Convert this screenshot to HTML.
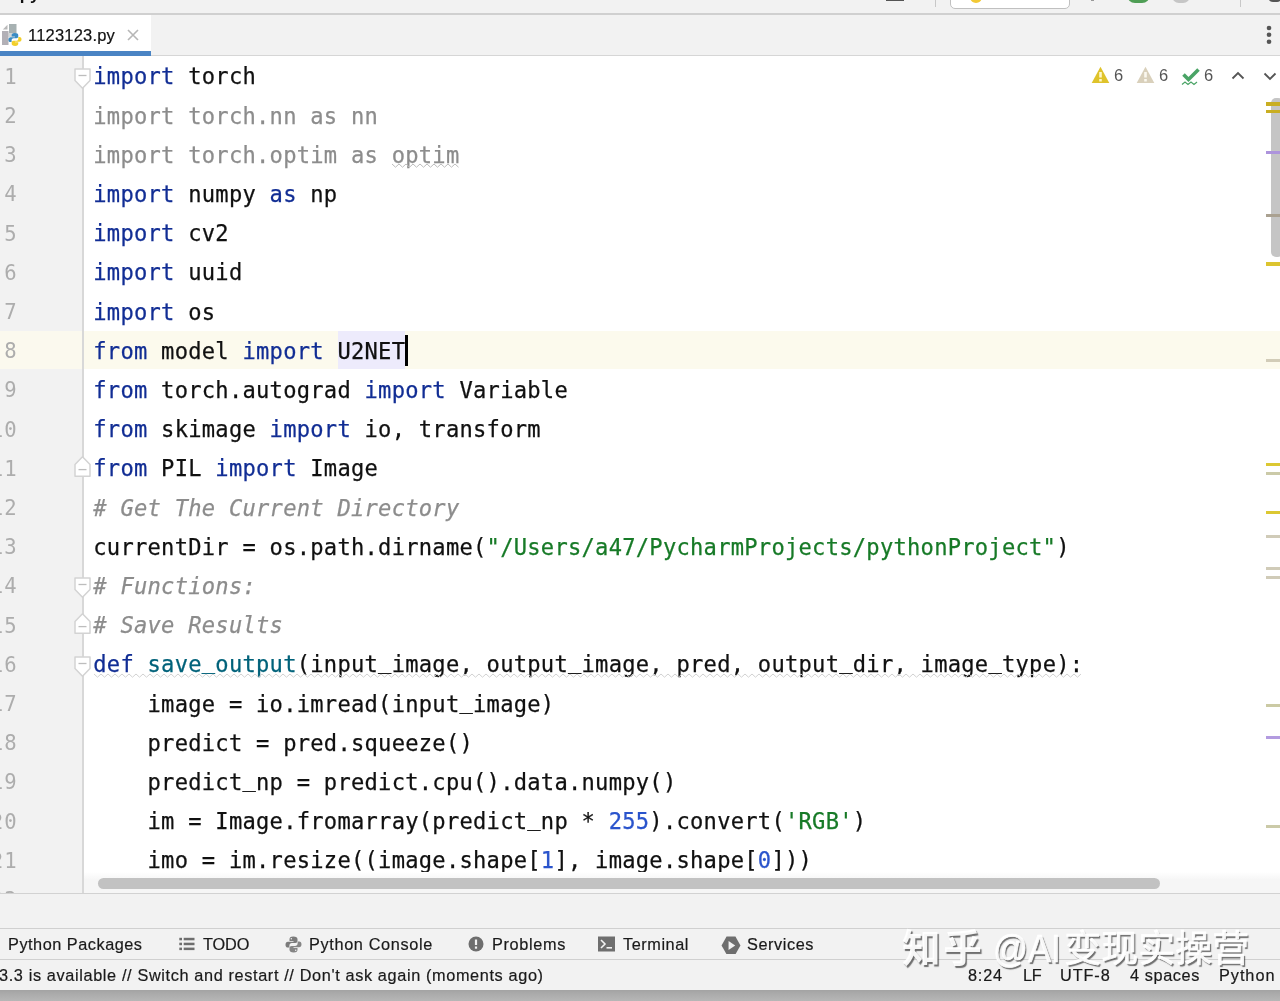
<!DOCTYPE html>
<html lang="en">
<head>
<meta charset="utf-8">
<title>1123123.py</title>
<style>
*{box-sizing:border-box;margin:0;padding:0}
html,body{width:1280px;height:1001px;overflow:hidden;background:#f2f2f2}
body{position:relative;font-family:"Liberation Sans","Noto Sans CJK SC",sans-serif;color:#1a1a1a}
.abs{position:absolute}
#top{left:0;top:0;width:1280px;height:15px;background:#f2f2f2;border-bottom:2px solid #d0d0d0;overflow:hidden}
#tabbar{left:0;top:15px;width:1280px;height:41px;background:#f2f2f2;border-bottom:1px solid #d6d6d6}
#tab{left:0;top:0;width:151px;height:41px;background:#fff}
#tab .ul{left:0;top:36px;width:151px;height:5px;background:#4a84c4}
#tabname{will-change:transform;-webkit-text-stroke:.2px;letter-spacing:.2px;left:27.5px;top:10px;font-size:16.5px;line-height:20px;color:#111;white-space:nowrap}
#editor{left:0;top:56px;width:1280px;height:838px;background:#fff;overflow:hidden}
#gutter{left:0;top:0;width:83px;height:838px;background:#f2f2f2}
#gline{left:82px;top:0;width:2px;height:838px;background:#d8d8d8}
#caretline{left:0;top:275px;width:1280px;height:38.3px;background:#fcfaed}
.ln{position:absolute;left:-42.2px;width:60px;text-align:right;height:39.2px;line-height:39.2px;margin-top:.5px;font-family:"DejaVu Sans Mono","Liberation Mono",monospace;font-size:20.6px;letter-spacing:1.1px;color:#adadad;white-space:pre}
.cl{-webkit-text-stroke:.25px;position:absolute;left:93.3px;height:39.2px;line-height:39.2px;font-family:"DejaVu Sans Mono","Liberation Mono",monospace;font-size:22.1px;letter-spacing:.26px;color:#101010;white-space:pre}
.u{position:relative;top:-4px}
.k{color:#112d94}
.g{color:#8c8c8c}
.c{color:#8c8c8c;font-style:italic}
.s{color:#177a27}
.n{color:#2a54cc}
.f{color:#00627a}
#hl{left:337.6px;top:274.8px;width:67.4px;height:38.2px;background:#edebfc}
#caret{left:405px;top:279px;width:3px;height:31px;background:#000}
#vthumb{left:1271px;top:42px;width:12px;height:159px;border-radius:5px;background:#c5c5c5}
#htrack{left:84px;top:816px;width:1196px;height:22px;background:linear-gradient(#fff,#f6f6f6 35%)}
#ebot{left:0;top:837px;width:1280px;height:1px;background:#d2d2d2}
#hthumb{left:98px;top:821.6px;width:1062px;height:11.6px;border-radius:6px;background:#c2c2c2}
#gap{left:0;top:894px;width:1280px;height:35px;background:#f2f2f2;border-bottom:1px solid #d0d0d0}
#tools{left:0;top:929px;width:1280px;height:31px;background:#f2f2f2;border-bottom:1px solid #d0d0d0}
#status{left:0;top:960px;width:1280px;height:30px;background:#f2f2f2}
#below{left:0;top:990px;width:1280px;height:11px;background:linear-gradient(#a3a3a3,#ababab 35%,#b6b6b6)}
.tw{will-change:transform;-webkit-text-stroke:.2px;position:absolute;top:5px;font-size:16.3px;line-height:20px;white-space:nowrap;color:#1a1a1a}
.st{will-change:transform;-webkit-text-stroke:.2px;position:absolute;top:5px;font-size:16.3px;line-height:20px;white-space:nowrap;color:#1a1a1a}
.ic{position:absolute}
.cnt{will-change:transform;position:absolute;top:9px;font-size:16.5px;line-height:20px;color:#555}
#wm{left:903px;top:923px;font-size:37px;line-height:52px;white-space:nowrap;color:rgba(255,255,255,.94);-webkit-text-stroke:.7px rgba(255,255,255,.95);text-shadow:1.5px 2px 1px rgba(60,60,60,.72);font-family:"Liberation Sans","Noto Sans CJK SC",sans-serif;word-spacing:-1.5px}
#wm .lg{font-weight:bold;font-size:38.5px;letter-spacing:2.8px;-webkit-text-stroke:0;margin-left:-1px}
#wm .at{display:inline-block;font-size:38.4px;transform:scaleX(.9);transform-origin:0 50%;margin-right:-4.5px}
</style>
</head>
<body>
<div id="top" class="abs">
  <div class="abs" style="left:15px;top:-14px;font-size:17px;line-height:17px;font-weight:bold;color:#111;will-change:transform">.py</div>
  <div class="abs" style="left:886px;top:-1px;width:18px;height:2px;background:#555"></div>
  <div class="abs" style="left:935px;top:0;width:1px;height:7px;background:#c8c8c8"></div>
  <div class="abs" style="left:950px;top:-12px;width:120px;height:21px;background:#fff;border:1px solid #c0c0c0;border-radius:5px"></div>
  <div class="abs" style="left:970px;top:-9px;width:12px;height:12px;border-radius:6px;background:#f2c935"></div>
  <div class="abs" style="left:1091px;top:-1px;width:3px;height:2px;background:#999"></div>
  <div class="abs" style="left:1127px;top:-13px;width:23px;height:16px;border-radius:9px;background:#4f9e55"></div>
  <div class="abs" style="left:1172px;top:-12px;width:18px;height:15px;border-radius:7px;background:#c6c6c6"></div>
  <div class="abs" style="left:1240px;top:0;width:1px;height:7px;background:#c8c8c8"></div>
  <div class="abs" style="left:1268px;top:-10px;width:14px;height:12px;border-radius:5px;background:#555"></div>
</div>
<div id="tabbar" class="abs">
  <div id="tab" class="abs">
    <svg class="abs" style="left:0px;top:8px" width="24" height="26" viewBox="0 0 24 26">
      <path d="M2.800 6.500 L7.500 1.800 V6.500 Z" fill="#b9b9b9"/>
      <rect x="9" y="1" width="7.500" height="9" fill="#a7b1b2"/>
      <rect x="2" y="8" width="6.500" height="14" fill="#b2b0b6"/>
      <path d="M8.500 10 h8 v4 h-8 z" fill="#a7b1b2" opacity=".5"/>
      <g transform="translate(8 9.500) scale(.82)"><path d="M8.300 .5 C5.300 .5 4.500 1.700 4.500 3.200 V5 H8.500 V5.700 H3 C1.400 5.700 .5 7 .5 8.700 C.5 10.400 1.300 11.600 2.900 11.600 H4.400 V9.400 C4.400 8 5.500 6.900 6.900 6.900 H10.400 C11.600 6.900 12.500 6 12.500 4.900 V3.200 C12.500 1.600 11.200 .5 8.300 .5 Z" fill="#3a8cc4"/><path d="M8.300 .5 C5.300 .5 4.500 1.700 4.500 3.200 V5 H8.500 V5.700 H3 C1.400 5.700 .5 7 .5 8.700 C.5 10.400 1.300 11.600 2.900 11.600 H4.400 V9.400 C4.400 8 5.500 6.900 6.900 6.900 H10.400 C11.600 6.900 12.500 6 12.500 4.900 V3.200 C12.500 1.600 11.200 .5 8.300 .5 Z" fill="#f2cf2a" transform="rotate(180 8.500 8.500)"/></g>
    </svg>
    <div id="tabname" class="abs">1123123.py</div>
    <svg class="abs" style="left:127px;top:14px" width="12" height="12" viewBox="0 0 12 12"><path d="M1 1 L11 11 M11 1 L1 11" stroke="#b6b6b6" stroke-width="1.600" fill="none"/></svg>
    <div class="ul abs"></div>
  </div>
  <svg class="abs" style="left:1265px;top:8px" width="8" height="24" viewBox="0 0 8 24"><circle cx="4" cy="5" r="2.300" fill="#555"/><circle cx="4" cy="11.800" r="2.300" fill="#555"/><circle cx="4" cy="18.800" r="2.300" fill="#555"/></svg>
</div>
<div id="editor" class="abs">
  <div id="caretline" class="abs"></div>
  <div id="gutter" class="abs"></div>
  <div class="abs" style="left:0;top:275px;width:83px;height:38.3px;background:#fbf9ee"></div>
  <div id="gline" class="abs"></div>
  <div id="hl" class="abs"></div>
  <div id="caret" class="abs"></div>
<div id="code" class="abs" style="left:0;top:0;width:1280px;height:838px;will-change:transform">
<div class="ln" style="top:1.3px">1</div>
<div class="cl" style="top:1.3px"><span class="k">import</span> torch</div>
<div class="ln" style="top:40.5px">2</div>
<div class="cl" style="top:40.5px"><span class="g">import torch.nn as nn</span></div>
<div class="ln" style="top:79.7px">3</div>
<div class="cl" style="top:79.7px"><span class="g">import torch.optim as <span class="wv2">optim</span></span></div>
<div class="ln" style="top:118.9px">4</div>
<div class="cl" style="top:118.9px"><span class="k">import</span> numpy <span class="k">as</span> np</div>
<div class="ln" style="top:158.1px">5</div>
<div class="cl" style="top:158.1px"><span class="k">import</span> cv2</div>
<div class="ln" style="top:197.3px">6</div>
<div class="cl" style="top:197.3px"><span class="k">import</span> uuid</div>
<div class="ln" style="top:236.5px">7</div>
<div class="cl" style="top:236.5px"><span class="k">import</span> os</div>
<div class="ln" style="top:275.7px">8</div>
<div class="cl" style="top:275.7px"><span class="k">from</span> model <span class="k">import</span> U2NET</div>
<div class="ln" style="top:314.9px">9</div>
<div class="cl" style="top:314.9px"><span class="k">from</span> torch.autograd <span class="k">import</span> Variable</div>
<div class="ln" style="top:354.1px">10</div>
<div class="cl" style="top:354.1px"><span class="k">from</span> skimage <span class="k">import</span> io, transform</div>
<div class="ln" style="top:393.3px">11</div>
<div class="cl" style="top:393.3px"><span class="k">from</span> PIL <span class="k">import</span> Image</div>
<div class="ln" style="top:432.5px">12</div>
<div class="cl" style="top:432.5px"><span class="c"># Get The Current Directory</span></div>
<div class="ln" style="top:471.7px">13</div>
<div class="cl" style="top:471.7px">currentDir = os.path.dirname(<span class="s">"/Users/a47/PycharmProjects/pythonProject"</span>)</div>
<div class="ln" style="top:510.9px">14</div>
<div class="cl" style="top:510.9px"><span class="c"># Functions:</span></div>
<div class="ln" style="top:550.1px">15</div>
<div class="cl" style="top:550.1px"><span class="c"># Save Results</span></div>
<div class="ln" style="top:589.3px">16</div>
<div class="cl" style="top:589.3px"><span class="wv"><span class="k">def</span> <span class="f">save<span class="u">_</span>output</span>(input<span class="u">_</span>image, output<span class="u">_</span>image, pred, output<span class="u">_</span>dir, image<span class="u">_</span>type):</span></div>
<div class="ln" style="top:628.5px">17</div>
<div class="cl" style="top:628.5px">    image = io.imread(input<span class="u">_</span>image)</div>
<div class="ln" style="top:667.7px">18</div>
<div class="cl" style="top:667.7px">    predict = pred.squeeze()</div>
<div class="ln" style="top:706.9px">19</div>
<div class="cl" style="top:706.9px">    predict<span class="u">_</span>np = predict.cpu().data.numpy()</div>
<div class="ln" style="top:746.1px">20</div>
<div class="cl" style="top:746.1px">    im = Image.fromarray(predict<span class="u">_</span>np * <span class="n">255</span>).convert(<span class="s">'RGB'</span>)</div>
<div class="ln" style="top:785.3px">21</div>
<div class="cl" style="top:785.3px">    imo = im.resize((image.shape[<span class="n">1</span>], image.shape[<span class="n">0</span>]))</div>
<div class="ln" style="top:824.5px">22</div>
<svg class="abs" style="left:74px;top:11.5px" width="17" height="21" viewBox="0 0 17 21"><path d="M1 1 H16 V12.5 L8.5 20.2 L1 12.5 Z" fill="#fff" stroke="#d3d3d3" stroke-width="1.5" stroke-linejoin="round"/><path d="M4.5 7.5 H12.5" stroke="#bdbdbd" stroke-width="1.3"/></svg>
<svg class="abs" style="left:74px;top:399.7px" width="17" height="21" viewBox="0 0 17 21"><path d="M1 20.2 H16 V8.5 L8.5 .8 L1 8.5 Z" fill="#fff" stroke="#d3d3d3" stroke-width="1.5" stroke-linejoin="round"/><path d="M4.5 13.6 H12.5" stroke="#bdbdbd" stroke-width="1.3"/></svg>
<svg class="abs" style="left:74px;top:521.1px" width="17" height="21" viewBox="0 0 17 21"><path d="M1 1 H16 V12.5 L8.5 20.2 L1 12.5 Z" fill="#fff" stroke="#d3d3d3" stroke-width="1.5" stroke-linejoin="round"/><path d="M4.5 7.5 H12.5" stroke="#bdbdbd" stroke-width="1.3"/></svg>
<svg class="abs" style="left:74px;top:556.5px" width="17" height="21" viewBox="0 0 17 21"><path d="M1 20.2 H16 V8.5 L8.5 .8 L1 8.5 Z" fill="#fff" stroke="#d3d3d3" stroke-width="1.5" stroke-linejoin="round"/><path d="M4.5 13.6 H12.5" stroke="#bdbdbd" stroke-width="1.3"/></svg>
<svg class="abs" style="left:74px;top:599.5px" width="17" height="21" viewBox="0 0 17 21"><path d="M1 1 H16 V12.5 L8.5 20.2 L1 12.5 Z" fill="#fff" stroke="#d3d3d3" stroke-width="1.5" stroke-linejoin="round"/><path d="M4.5 7.5 H12.5" stroke="#bdbdbd" stroke-width="1.3"/></svg>
<svg class="abs" style="left:392.0px;top:107.4px" width="69" height="5" viewBox="0 0 69 5"><path d="M0.0 1.0 L3.5 4.2 L7.0 1.0 L10.5 4.2 L14.0 1.0 L17.5 4.2 L21.0 1.0 L24.5 4.2 L28.0 1.0 L31.5 4.2 L35.0 1.0 L38.5 4.2 L42.0 1.0 L45.5 4.2 L49.0 1.0 L52.5 4.2 L56.0 1.0 L59.5 4.2 L63.0 1.0 L66.5 4.2" fill="none" stroke="#bdbdbd" stroke-width="1.0" stroke-linejoin="round"/></svg>
<svg class="abs" style="left:94.0px;top:617.1px" width="990" height="5" viewBox="0 0 990 5"><path d="M0.0 1.0 L3.5 4.2 L7.0 1.0 L10.5 4.2 L14.0 1.0 L17.5 4.2 L21.0 1.0 L24.5 4.2 L28.0 1.0 L31.5 4.2 L35.0 1.0 L38.5 4.2 L42.0 1.0 L45.5 4.2 L49.0 1.0 L52.5 4.2 L56.0 1.0 L59.5 4.2 L63.0 1.0 L66.5 4.2 L70.0 1.0 L73.5 4.2 L77.0 1.0 L80.5 4.2 L84.0 1.0 L87.5 4.2 L91.0 1.0 L94.5 4.2 L98.0 1.0 L101.5 4.2 L105.0 1.0 L108.5 4.2 L112.0 1.0 L115.5 4.2 L119.0 1.0 L122.5 4.2 L126.0 1.0 L129.5 4.2 L133.0 1.0 L136.5 4.2 L140.0 1.0 L143.5 4.2 L147.0 1.0 L150.5 4.2 L154.0 1.0 L157.5 4.2 L161.0 1.0 L164.5 4.2 L168.0 1.0 L171.5 4.2 L175.0 1.0 L178.5 4.2 L182.0 1.0 L185.5 4.2 L189.0 1.0 L192.5 4.2 L196.0 1.0 L199.5 4.2 L203.0 1.0 L206.5 4.2 L210.0 1.0 L213.5 4.2 L217.0 1.0 L220.5 4.2 L224.0 1.0 L227.5 4.2 L231.0 1.0 L234.5 4.2 L238.0 1.0 L241.5 4.2 L245.0 1.0 L248.5 4.2 L252.0 1.0 L255.5 4.2 L259.0 1.0 L262.5 4.2 L266.0 1.0 L269.5 4.2 L273.0 1.0 L276.5 4.2 L280.0 1.0 L283.5 4.2 L287.0 1.0 L290.5 4.2 L294.0 1.0 L297.5 4.2 L301.0 1.0 L304.5 4.2 L308.0 1.0 L311.5 4.2 L315.0 1.0 L318.5 4.2 L322.0 1.0 L325.5 4.2 L329.0 1.0 L332.5 4.2 L336.0 1.0 L339.5 4.2 L343.0 1.0 L346.5 4.2 L350.0 1.0 L353.5 4.2 L357.0 1.0 L360.5 4.2 L364.0 1.0 L367.5 4.2 L371.0 1.0 L374.5 4.2 L378.0 1.0 L381.5 4.2 L385.0 1.0 L388.5 4.2 L392.0 1.0 L395.5 4.2 L399.0 1.0 L402.5 4.2 L406.0 1.0 L409.5 4.2 L413.0 1.0 L416.5 4.2 L420.0 1.0 L423.5 4.2 L427.0 1.0 L430.5 4.2 L434.0 1.0 L437.5 4.2 L441.0 1.0 L444.5 4.2 L448.0 1.0 L451.5 4.2 L455.0 1.0 L458.5 4.2 L462.0 1.0 L465.5 4.2 L469.0 1.0 L472.5 4.2 L476.0 1.0 L479.5 4.2 L483.0 1.0 L486.5 4.2 L490.0 1.0 L493.5 4.2 L497.0 1.0 L500.5 4.2 L504.0 1.0 L507.5 4.2 L511.0 1.0 L514.5 4.2 L518.0 1.0 L521.5 4.2 L525.0 1.0 L528.5 4.2 L532.0 1.0 L535.5 4.2 L539.0 1.0 L542.5 4.2 L546.0 1.0 L549.5 4.2 L553.0 1.0 L556.5 4.2 L560.0 1.0 L563.5 4.2 L567.0 1.0 L570.5 4.2 L574.0 1.0 L577.5 4.2 L581.0 1.0 L584.5 4.2 L588.0 1.0 L591.5 4.2 L595.0 1.0 L598.5 4.2 L602.0 1.0 L605.5 4.2 L609.0 1.0 L612.5 4.2 L616.0 1.0 L619.5 4.2 L623.0 1.0 L626.5 4.2 L630.0 1.0 L633.5 4.2 L637.0 1.0 L640.5 4.2 L644.0 1.0 L647.5 4.2 L651.0 1.0 L654.5 4.2 L658.0 1.0 L661.5 4.2 L665.0 1.0 L668.5 4.2 L672.0 1.0 L675.5 4.2 L679.0 1.0 L682.5 4.2 L686.0 1.0 L689.5 4.2 L693.0 1.0 L696.5 4.2 L700.0 1.0 L703.5 4.2 L707.0 1.0 L710.5 4.2 L714.0 1.0 L717.5 4.2 L721.0 1.0 L724.5 4.2 L728.0 1.0 L731.5 4.2 L735.0 1.0 L738.5 4.2 L742.0 1.0 L745.5 4.2 L749.0 1.0 L752.5 4.2 L756.0 1.0 L759.5 4.2 L763.0 1.0 L766.5 4.2 L770.0 1.0 L773.5 4.2 L777.0 1.0 L780.5 4.2 L784.0 1.0 L787.5 4.2 L791.0 1.0 L794.5 4.2 L798.0 1.0 L801.5 4.2 L805.0 1.0 L808.5 4.2 L812.0 1.0 L815.5 4.2 L819.0 1.0 L822.5 4.2 L826.0 1.0 L829.5 4.2 L833.0 1.0 L836.5 4.2 L840.0 1.0 L843.5 4.2 L847.0 1.0 L850.5 4.2 L854.0 1.0 L857.5 4.2 L861.0 1.0 L864.5 4.2 L868.0 1.0 L871.5 4.2 L875.0 1.0 L878.5 4.2 L882.0 1.0 L885.5 4.2 L889.0 1.0 L892.5 4.2 L896.0 1.0 L899.5 4.2 L903.0 1.0 L906.5 4.2 L910.0 1.0 L913.5 4.2 L917.0 1.0 L920.5 4.2 L924.0 1.0 L927.5 4.2 L931.0 1.0 L934.5 4.2 L938.0 1.0 L941.5 4.2 L945.0 1.0 L948.5 4.2 L952.0 1.0 L955.5 4.2 L959.0 1.0 L962.5 4.2 L966.0 1.0 L969.5 4.2 L973.0 1.0 L976.5 4.2 L980.0 1.0 L983.5 4.2 L987.0 1.0" fill="none" stroke="#d2d2d2" stroke-width="1.0" stroke-linejoin="round"/></svg>
</div>
<div id="vthumb" class="abs"></div>
<div class="abs" style="left:1266px;top:46.2px;width:14px;height:3.5px;background:#c9ae22"></div>
<div class="abs" style="left:1266px;top:53.7px;width:14px;height:3.5px;background:#c9ae22"></div>
<div class="abs" style="left:1266px;top:94.6px;width:14px;height:3.3px;background:#ad94dc"></div>
<div class="abs" style="left:1266px;top:158.0px;width:14px;height:3.0px;background:#aaa191"></div>
<div class="abs" style="left:1266px;top:206.2px;width:14px;height:3.5px;background:#dcc42f"></div>
<div class="abs" style="left:1266px;top:303.0px;width:14px;height:2.8px;background:#d2ccb8"></div>
<div class="abs" style="left:1266px;top:406.7px;width:14px;height:3.4px;background:#dcc832"></div>
<div class="abs" style="left:1266px;top:416.0px;width:14px;height:3.0px;background:#cbcaa8"></div>
<div class="abs" style="left:1266px;top:454.5px;width:14px;height:3.5px;background:#dcc832"></div>
<div class="abs" style="left:1266px;top:479.0px;width:14px;height:3.0px;background:#d0cbb8"></div>
<div class="abs" style="left:1266px;top:511.0px;width:14px;height:3.0px;background:#d0cbb8"></div>
<div class="abs" style="left:1266px;top:520.0px;width:14px;height:3.0px;background:#d0cbb8"></div>
<div class="abs" style="left:1266px;top:648.0px;width:14px;height:3.0px;background:#cbcaa4"></div>
<div class="abs" style="left:1266px;top:680.0px;width:14px;height:3.0px;background:#b39be0"></div>
<div class="abs" style="left:1266px;top:768.6px;width:14px;height:3.3px;background:#cbcaa8"></div>
  <div id="htrack" class="abs"></div>
  <div id="ebot" class="abs"></div>
  <div id="hthumb" class="abs"></div>
  <!-- inspections widget -->
  <svg class="ic" style="left:1091px;top:10px" width="19" height="18" viewBox="0 0 19 18"><path d="M9.500 .8 L18.300 17 H.7 Z" fill="#dfc32b"/><rect x="8.200" y="6" width="2.600" height="5.500" fill="#fff7c8"/><rect x="8.200" y="13" width="2.600" height="2.500" fill="#fff7c8"/></svg>
  <div class="cnt" style="left:1114px">6</div>
  <svg class="ic" style="left:1136px;top:10px" width="19" height="18" viewBox="0 0 19 18"><path d="M9.500 .8 L18.300 17 H.7 Z" fill="#d9d0bb"/><rect x="8.200" y="6" width="2.600" height="5.500" fill="#fbf8ef"/><rect x="8.200" y="13" width="2.600" height="2.500" fill="#fbf8ef"/></svg>
  <div class="cnt" style="left:1159px">6</div>
  <svg class="ic" style="left:1181px;top:11px" width="20" height="20" viewBox="0 0 20 20"><path d="M2.500 7.500 L7.500 12.500 L17.500 2.500" stroke="#4aa466" stroke-width="3.600" fill="none"/><path d="M1 17.500 l3-2.500 l3 2.500 l3-2.500 l3 2.500 l3-2.500" stroke="#4aa466" stroke-width="1.200" fill="none"/></svg>
  <div class="cnt" style="left:1204px">6</div>
  <svg class="ic" style="left:1231px;top:15px" width="14" height="9" viewBox="0 0 14 9"><path d="M1.500 7.500 L7 2 L12.500 7.500" stroke="#555" stroke-width="1.800" fill="none"/></svg>
  <svg class="ic" style="left:1263px;top:16px" width="14" height="9" viewBox="0 0 14 9"><path d="M1.500 1.500 L7 7 L12.500 1.500" stroke="#555" stroke-width="1.800" fill="none"/></svg>
</div>
<div id="gap" class="abs"></div>
<div id="tools" class="abs">
  <div class="tw" style="left:8px;letter-spacing:.52px">Python Packages</div>
  <svg class="ic" style="left:179px;top:8px" width="16" height="14" viewBox="0 0 16 14"><g fill="#6e6e6e"><rect x=".3" y=".8" width="2.700" height="2.500"/><rect x="4.700" y=".8" width="10.800" height="2.500"/><rect x=".3" y="5.700" width="2.700" height="2.500"/><rect x="4.700" y="5.700" width="10.800" height="2.500"/><rect x=".3" y="10.600" width="2.700" height="2.500"/><rect x="4.700" y="10.600" width="10.800" height="2.500"/></g></svg>
  <div class="tw" style="left:203px;letter-spacing:-.1px">TODO</div>
  <svg class="ic" style="left:285px;top:7px" width="17" height="17" viewBox="0 0 17 17"><path d="M8.300 .5 C5.300 .5 4.500 1.700 4.500 3.200 V5 H8.500 V5.700 H3 C1.400 5.700 .5 7 .5 8.700 C.5 10.400 1.300 11.600 2.900 11.600 H4.400 V9.400 C4.400 8 5.500 6.900 6.900 6.900 H10.400 C11.600 6.900 12.500 6 12.500 4.900 V3.200 C12.500 1.600 11.200 .5 8.300 .5 Z" fill="#7b7b7b"/><path d="M8.300 .5 C5.300 .5 4.500 1.700 4.500 3.200 V5 H8.500 V5.700 H3 C1.400 5.700 .5 7 .5 8.700 C.5 10.400 1.300 11.600 2.900 11.600 H4.400 V9.400 C4.400 8 5.500 6.900 6.900 6.900 H10.400 C11.600 6.900 12.500 6 12.500 4.900 V3.200 C12.500 1.600 11.200 .5 8.300 .5 Z" fill="#858585" transform="rotate(180 8.500 8.500)"/><circle cx="6.300" cy="2.800" r=".75" fill="#f2f2f2"/><circle cx="10.700" cy="14.200" r=".75" fill="#f2f2f2"/></svg>
  <div class="tw" style="left:309px;letter-spacing:.64px">Python Console</div>
  <svg class="ic" style="left:468px;top:7px" width="16" height="16" viewBox="0 0 16 16"><circle cx="8" cy="8" r="7.500" fill="#6e6e6e"/><rect x="6.900" y="3.500" width="2.200" height="5.500" fill="#f2f2f2"/><rect x="6.900" y="10.500" width="2.200" height="2.200" fill="#f2f2f2"/></svg>
  <div class="tw" style="left:492px;letter-spacing:.65px">Problems</div>
  <svg class="ic" style="left:598px;top:7px" width="17" height="16" viewBox="0 0 17 16"><rect x="0" y="0.500" width="17" height="15" fill="#6e6e6e"/><path d="M3 4 L7 8 L3 12" stroke="#f2f2f2" stroke-width="1.600" fill="none"/><rect x="8.500" y="11" width="5.500" height="1.600" fill="#f2f2f2"/></svg>
  <div class="tw" style="left:623px;letter-spacing:.56px">Terminal</div>
  <svg class="ic" style="left:720.5px;top:6.500px" width="20" height="18.900" viewBox="0 0 18 17"><path d="M5 .5 H13 L17.500 8.500 L13 16.500 H5 L.5 8.500 Z" fill="#6e6e6e"/><path d="M6.800 4.500 L12.800 8.500 L6.800 12.500 Z" fill="#f2f2f2"/></svg>
  <div class="tw" style="left:747px;letter-spacing:.57px">Services</div>
</div>
<div id="status" class="abs">
  <div class="st" style="left:-1px;letter-spacing:.63px">3.3 is available // Switch and restart // Don't ask again (moments ago)</div>
  <div class="st" style="left:968px;letter-spacing:.8px">8:24</div>
  <div class="st" style="left:1023px;letter-spacing:-.3px">LF</div>
  <div class="st" style="left:1060px;letter-spacing:.9px">UTF-8</div>
  <div class="st" style="left:1130px;letter-spacing:.6px">4 spaces</div>
  <div class="st" style="left:1219px;letter-spacing:.95px">Python 3.9</div>
</div>
<div id="wm" class="abs"><span class="lg">知乎</span> <span class="at">@AI</span>变现实操营</div>
<div id="below" class="abs"></div>
</body>
</html>
